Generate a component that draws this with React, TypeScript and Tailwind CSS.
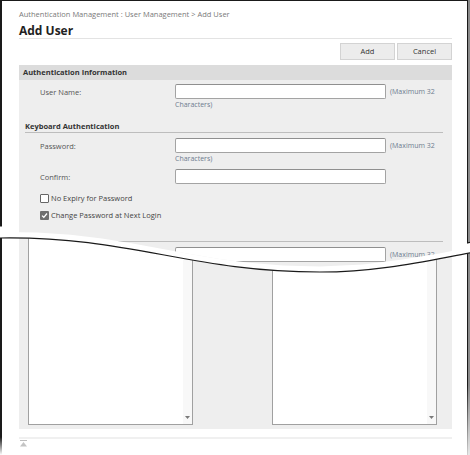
import React from "react";

function InputRow({ label, note }: { label: string; note?: boolean }) {
  return (
    <div>
      <div className="flex items-center h-[15px]">
        <div className="w-[156px] pl-[21px] text-[#555] text-[7.5px] leading-[12px]">{label}</div>
        <div className="w-[211px] h-[15px] bg-white border border-[#a3a3a3] border-t-[#8f8f8f] rounded-[2px]" />
        {note && <div className="ml-[4px] text-[7px] leading-[12px] text-[#6d7c8e]">(Maximum 32</div>}
      </div>
      {note && <div className="pl-[156px] h-[12px] text-[7px] leading-[12px] text-[#6d7c8e]">Characters)</div>}
    </div>
  );
}

function SubHeader({ text }: { text: string }) {
  return (
    <div className="ml-[6px] mr-[9px] h-[13px] border-b border-[#bdbdbd] text-[7.5px] leading-[12px] font-bold text-[#333]">
      {text}
    </div>
  );
}

function Check({ checked, label }: { checked?: boolean; label: string }) {
  return (
    <div className="flex items-center h-[12px] pl-[21px]">
      {checked ? (
        <div className="w-[9px] h-[9px] rounded-[1px] bg-[#6e6e6e] flex items-center justify-center">
          <svg width="7" height="7" viewBox="0 0 7 7">
            <path d="M1 3.6 L2.8 5.3 L6 1.5" stroke="#fff" strokeWidth="1.3" fill="none" />
          </svg>
        </div>
      ) : (
        <div className="w-[9px] h-[9px] rounded-[1px] bg-white border border-[#666]" />
      )}
      <div className="ml-[2px] text-[7.5px] leading-[12px] text-[#444]">{label}</div>
    </div>
  );
}

function TextArea() {
  return (
    <div className="w-[165px] h-[199px] bg-white border border-[#a0a0a0] flex justify-end">
      <div className="w-[9px] h-full bg-[#f8f8f8] flex flex-col justify-end items-center pb-[5px]">
        <svg width="5" height="3" viewBox="0 0 5 3">
          <path d="M0 0 L5 0 L2.5 3 Z" fill="#7a7a7a" />
        </svg>
      </div>
    </div>
  );
}

export default function App() {
  return (
    <div className="relative w-[470px] h-[455px] bg-white overflow-hidden font-['Open_Sans',sans-serif]">
      <div className="w-[468px] h-[455px] border-l-2 border-t border-r border-[#1a1a1a] shadow-[2px_0_1px_#8a8a8a] bg-white">
        {/* upper piece */}
        <div className="relative z-10 h-[274px] overflow-hidden bg-white pl-[17px] pr-[15px] [clip-path:polygon(0_0,100%_0,100%_247px,436px_252.7px,400.5px_258.6px,361px_263.5px,318px_265.5px,281px_264.5px,247px_261.7px,216px_257.7px,186.6px_252.7px,158px_247.5px,129.4px_242.3px,100px_237.6px,68.7px_233.8px,35px_231.5px,0_231px)]">
          <div className="mt-[7px] h-[12px] text-[7.5px] leading-[12px] text-[#7a7a7a]">
            Authentication Management : User Management &gt; Add User
          </div>
          <div className="mt-[4px] h-[15px] border-b border-[#e3e3e3]">
            <div className="h-[14px] text-[12px] leading-[14px] font-bold text-[#222]">Add User</div>
          </div>
          <div className="mt-[4px] flex justify-end gap-[2px]">
            <div className="w-[55px] h-[17px] bg-[#ececec] border border-[#d3d3d3] flex items-center justify-center text-[7.5px] text-[#333]">Add</div>
            <div className="w-[55px] h-[17px] bg-[#ececec] border border-[#d3d3d3] flex items-center justify-center text-[7.5px] text-[#333]">Cancel</div>
          </div>
          <div className="mt-[5px] bg-[#eeeeee] h-[300px]">
            <div className="h-[15px] bg-[#dcdcdc] pl-[4px] flex items-center text-[7.5px] font-bold text-[#333]">
              Authentication Information
            </div>
            <div className="pt-[4px]">
              <InputRow label="User Name:" note />
              <div className="mt-[9px]">
                <SubHeader text="Keyboard Authentication" />
              </div>
              <div className="mt-[5px]">
                <InputRow label="Password:" note />
              </div>
              <div className="mt-[4px]">
                <InputRow label="Confirm:" />
              </div>
              <div className="mt-[8px]">
                <Check label="No Expiry for Password" />
              </div>
              <div className="mt-[5px]">
                <Check checked label="Change Password at Next Login" />
              </div>
              <div className="mt-[8px]">
                <SubHeader text="" />
              </div>
              <div className="mt-[5px]">
                <InputRow label="" note />
              </div>
            </div>
          </div>
        </div>
        {/* lower piece */}
        <div className="mt-[-49px] pl-[17px] pr-[15px] bg-white">
          <div className="bg-[#eeeeee] pl-[9px] pr-[15px] pb-[4px] flex gap-[79px]">
            <TextArea />
            <TextArea />
          </div>
          <div className="mt-[8px] h-[2px] bg-[#f0f0f0]" />
          <div className="mt-[1px] ml-[1px]">
            <svg width="7" height="7" viewBox="0 0 7 7">
              <rect x="0" y="0" width="7" height="1" fill="#bdbdbd" />
              <path d="M3.5 2 L7 6.5 L0 6.5 Z" fill="#c4c4c4" />
            </svg>
          </div>
        </div>
      </div>
      {/* wave break */}
      <svg className="absolute left-0 top-0 pointer-events-none" width="470" height="455" viewBox="0 0 470 455">
        <path
          d="M-2,226 L0,226 C130,224 190,261 320,261 C380,261 430,250 472,242 L472,252 L470,253 C430,260 380,272 320,272 C190,272 130,236 0,238 L-2,238 Z"
          fill="#fff"
        />
        <path d="M-2,226 L0,226 C130,224 190,261 320,261 C380,261 430,250 472,242" fill="none" stroke="#1a1a1a" strokeWidth="1.2" />
        <path d="M-2,238 L0,238 C130,236 190,272 320,272 C380,272 430,260 472,252.5" fill="none" stroke="#1a1a1a" strokeWidth="1.2" />
      </svg>
      {/* bottom fades */}
      <div className="absolute left-0 bottom-0 w-[3px] h-[18px] bg-linear-to-b from-transparent to-white" />
      <div className="absolute right-0 bottom-0 w-[5px] h-[70px] bg-linear-to-b from-transparent to-white/80" />
    </div>
  );
}
